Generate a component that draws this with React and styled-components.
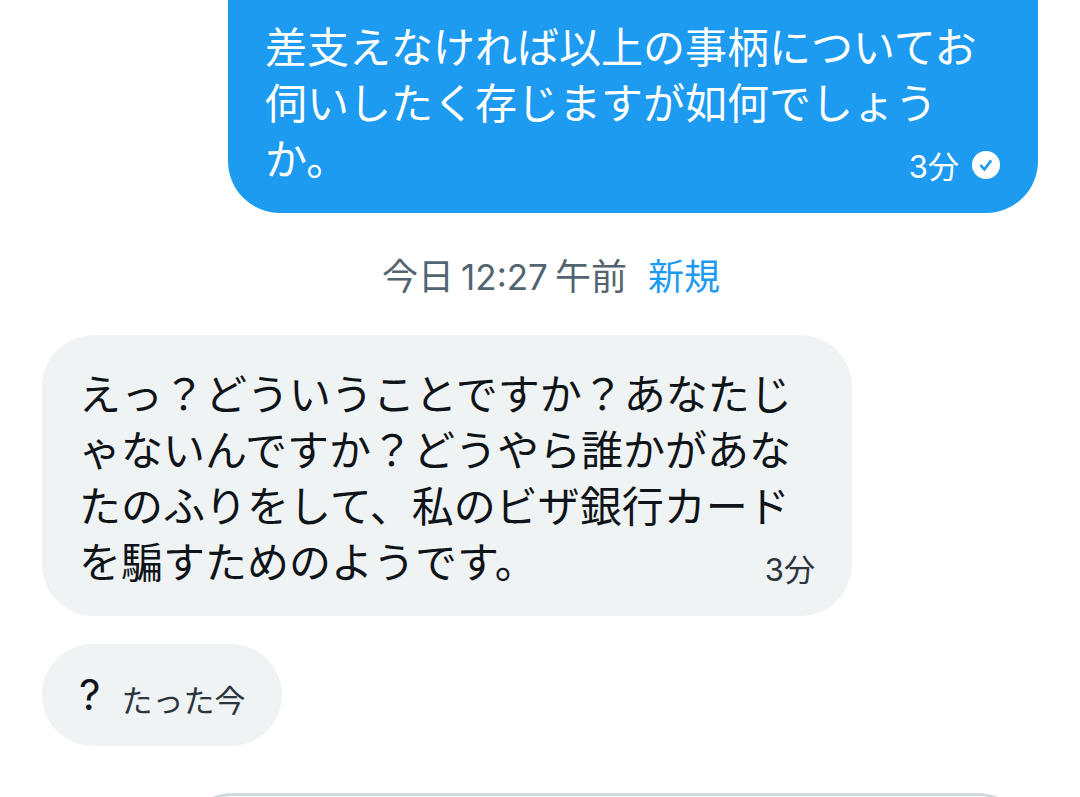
import React from "react";
import styled, { createGlobalStyle } from "styled-components";

const Global = createGlobalStyle`
  * { box-sizing: border-box; }
  body {
    margin: 0;
    background: #fff;
    overflow: hidden;
    font-family: Inter, "Noto Sans CJK JP", sans-serif;
  }
`;

const Conversation = styled.main`
  display: flex;
  flex-direction: column;
  padding: 0 42px;
`;

const Bubble = styled.article`
  width: calc(100% - 186px);
  padding: ${(p) => (p.$sent ? "20px 37px 24px" : "32px 37px 24px")};
  border-radius: ${(p) => (p.$sent ? "0 0 52px 52px" : "52px")};
  align-self: ${(p) => (p.$sent ? "flex-end" : "flex-start")};
  background: ${(p) => (p.$sent ? "#1d9bf0" : "#eff3f4")};
  color: ${(p) => (p.$sent ? "#fff" : "#0f1419")};
`;

const ShortBubble = styled(Bubble)`
  display: flex;
  align-items: flex-end;
  gap: 21px;
  width: fit-content;
  margin-top: 28px;
  padding: 23px 37px;
`;

const Message = styled.div`
  display: flow-root;
  font-size: 42px;
  line-height: 56px;
  line-break: loose;
`;

const Meta = styled.span`
  display: flex;
  align-items: center;
  gap: 12px;
  white-space: nowrap;
  font-size: 31px;
  line-height: 44px;
  color: ${(p) => (p.$sent ? "#fff" : "#2c353c")};
`;

const CornerMeta = styled(Meta)`
  float: right;
  margin-top: 13px;
`;

const Check = styled.svg`
  width: 30px;
  height: 30px;
  margin-bottom: 4px;
`;

const DateRow = styled.div`
  display: flex;
  justify-content: center;
  gap: 21px;
  padding: 38px 0 32px 22px;
  font-size: 36px;
  line-height: 52px;
  color: #536471;
`;

const DateTime = styled.time`
  display: flex;
  align-items: baseline;
  gap: 7px;
`;

const Clock = styled.span`
  font-size: 35px;
`;

const NewLabel = styled.span`
  color: #1d9bf0;
`;

const Composer = styled.input`
  height: 96px;
  margin: 47px 12px 0 142px;
  padding: 0 40px;
  font: inherit;
  font-size: 42px;
  background: #fff;
  border: 3px solid #cfd9de;
  border-radius: 48px;
`;

export default function App() {
  return (
    <>
      <Global />
      <Conversation lang="ja">
        <Bubble $sent>
          <Message>
            差支えなければ以上の事柄についてお伺いしたく存じますが如何でしょうか。
            <CornerMeta $sent>
              <time>3分</time>
              <Check viewBox="0 0 30 30" role="img" aria-label="送信済み">
                <circle cx="15" cy="15" r="14" fill="#fff" />
                <path
                  d="M9.4 15.2l4 4.2 6.8-9"
                  fill="none"
                  stroke="#1d9bf0"
                  strokeWidth="2.6"
                />
              </Check>
            </CornerMeta>
          </Message>
        </Bubble>
        <DateRow>
          <DateTime>
            <span>今日</span>
            <Clock>12:27</Clock>
            <span>午前</span>
          </DateTime>
          <NewLabel>新規</NewLabel>
        </DateRow>
        <Bubble>
          <Message>
            えっ？どういうことですか？あなたじゃないんですか？どうやら誰かがあなたのふりをして、私のビザ銀行カードを騙すためのようです。
            <CornerMeta>
              <time>3分</time>
            </CornerMeta>
          </Message>
        </Bubble>
        <ShortBubble>
          <Message>?</Message>
          <Meta>
            <time>たった今</time>
          </Meta>
        </ShortBubble>
        <Composer type="text" aria-label="メッセージを作成" />
      </Conversation>
    </>
  );
}
